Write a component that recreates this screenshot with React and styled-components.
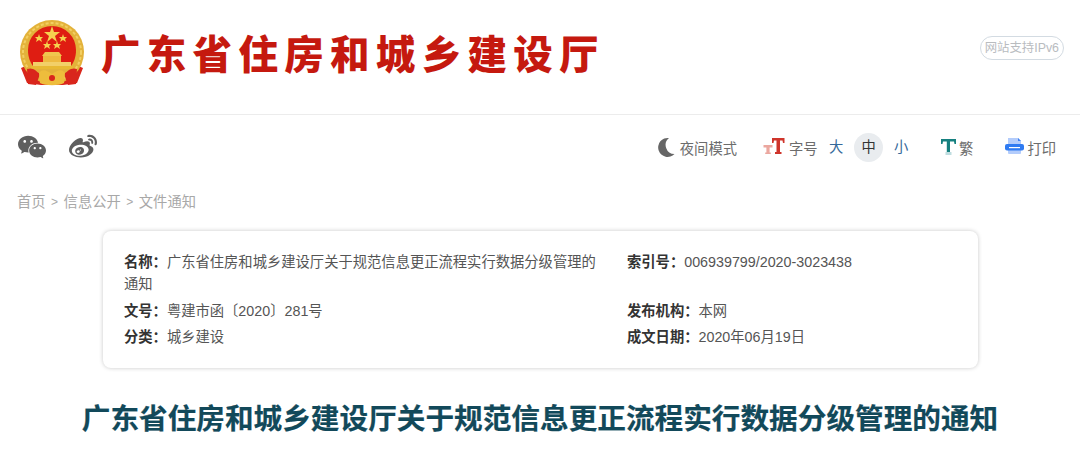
import React from "react";
import styled, { createGlobalStyle } from "styled-components";
import { AiFillWechat } from "react-icons/ai";
import { FaWeibo } from "react-icons/fa";

const GlobalStyle = createGlobalStyle`
  html, body {
    margin: 0;
    padding: 0;
    background: #fff;
    overflow: hidden;
  }
  body {
    font-family: "Liberation Sans", "Noto Sans CJK SC", sans-serif;
  }
`;

const Page = styled.div`
  width: 1080px;
  height: 451px;
  overflow: hidden;
`;

const Header = styled.header`
  height: 106px;
  border-bottom: 1px solid #ececec;
  display: flex;
  align-items: center;
  padding: 0 16px 8px 19px;
`;

const SiteName = styled.div`
  margin-left: 16px;
  font-family: "Noto Sans CJK SC", sans-serif;
  font-weight: 900;
  font-size: 39.5px;
  line-height: 50px;
  letter-spacing: 6.3px;
  color: #c5190f;
  white-space: nowrap;
  margin-bottom: 3px;
`;

const Ipv6 = styled.div`
  margin-left: auto;
  margin-bottom: 10px;
  height: 22px;
  line-height: 22px;
  padding: 0 4px;
  border: 1px solid #d3dbe2;
  border-radius: 12px;
  font-size: 12.4px;
  color: #b9bcbf;
  white-space: nowrap;
`;

const Toolbar = styled.div`
  display: flex;
  align-items: center;
  height: 64px;
  padding: 0 24px 0 16px;
`;

const Social = styled.div`
  display: flex;
  align-items: center;
  gap: 21px;
  margin-right: auto;
  color: #5f5f5f;
`;

const Tool = styled.div`
  display: flex;
  align-items: center;
  gap: ${(p) => p.$gap || 5}px;
  margin-left: ${(p) => p.$left || 0}px;
  font-size: 14.3px;
  color: #6c6c6c;
  white-space: nowrap;
`;

const SizeOption = styled.div`
  width: 29px;
  height: 29px;
  line-height: 29px;
  text-align: center;
  border-radius: 50%;
  font-size: 14.3px;
  margin-left: ${(p) => p.$left || 0}px;
  color: ${(p) => (p.$active ? "#333" : "#35699a")};
  background: ${(p) => (p.$active ? "#e9ecef" : "transparent")};
`;

const Crumbs = styled.nav`
  display: flex;
  align-items: center;
  gap: 5px;
  height: 42px;
  padding-left: 17px;
  font-size: 14.3px;
  color: #a8a8a8;
`;

const Sep = styled.span`
  font-size: 12px;
  margin: 3px 0.5px 0;
`;

const Card = styled.section`
  margin: 10px 0 0 103px;
  width: 875px;
  height: 137px;
  box-sizing: border-box;
  padding: 20px 21px;
  background: #fff;
  border-radius: 8px;
  box-shadow: 0 0 4px rgba(0, 0, 0, 0.22);
  display: grid;
  grid-template-columns: 503px 1fr;
  grid-auto-rows: min-content;
  row-gap: 4.5px;
`;

const Field = styled.div`
  width: 480px;
  font-size: 14.3px;
  line-height: 22px;
  color: #555;
`;

const Label = styled.b`
  font-weight: 700;
  color: #333;
`;

const Title = styled.h1`
  margin: 31px 0 0;
  text-align: center;
  font-family: "Noto Sans CJK SC", sans-serif;
  font-size: 28.65px;
  line-height: 36px;
  font-weight: 700;
  -webkit-text-stroke: 0.2px #12495a;
  color: #12495a;
  white-space: nowrap;
`;

const Emblem = () => (
  <svg width="66" height="68" viewBox="0 0 66 68">
    <path d="M9 46 L2 49 L8 64 L22 66 L44 66 L58 64 L64 49 L57 46 Z" fill="#d9261c" />
    <circle cx="33" cy="33" r="32" fill="#e3b23a" />
    <circle cx="33" cy="33" r="29" fill="none" stroke="#f3cf62" strokeWidth="2" strokeDasharray="3 2" />
    <path d="M9 31 A24 24 0 0 1 57 31 C57 38 55 43 52 47 L14 47 C11 43 9 38 9 31 Z" fill="#df1d12" />
    <polygon points="33,7 35,13 41,13 36,17 38,23 33,19 28,23 30,17 25,13 31,13" fill="#f6d24f" />
    <polygon points="20,15 21,18 24,18 22,20 23,23 20,21 17,23 18,20 16,18 19,18" fill="#f6d24f" />
    <polygon points="44,15 45,18 48,18 46,20 47,23 44,21 41,23 42,20 40,18 43,18" fill="#f6d24f" />
    <polygon points="28,22 29,25 32,25 30,27 31,30 28,28 25,30 26,27 24,25 27,25" fill="#f6d24f" />
    <polygon points="38,22 39,25 42,25 40,27 41,30 38,28 35,30 36,27 34,25 37,25" fill="#f6d24f" />
    <path d="M26 33 H40 L43 37 H23 Z" fill="#f0c64e" />
    <rect x="24" y="37" width="18" height="6" fill="#eeba40" />
    <rect x="14" y="43" width="38" height="4" fill="#f2cf68" />
    <rect x="12" y="47" width="42" height="3" fill="#e8b934" />
    <path d="M8 50 C14 48 17 52 21 55 L17 66 L9 65 Z" fill="#d9261c" />
    <path d="M58 50 C52 48 49 52 45 55 L49 66 L57 65 Z" fill="#d9261c" />
    <path d="M20 54 C24 49 28 52 33 55 C38 52 42 49 46 54 L45 64 C40 67 26 67 21 64 Z" fill="#eebd3c" />
    <circle cx="33" cy="59" r="3" fill="#d9261c" />
  </svg>
);

const MoonIcon = () => (
  <svg width="17" height="20" viewBox="0 0 17 20">
    <path d="M11 1 A9.5 9.5 0 1 0 16.5 17 A9 9 0 0 1 11 1 Z" fill="#666" />
  </svg>
);

const FontSizeIcon = () => (
  <svg width="22" height="20" viewBox="0 0 22 20">
    <path d="M0.5 8 H9.5 V10.5 H6.6 V15.5 H7.8 V17 H2.2 V15.5 H3.4 V10.5 H0.5 Z" fill="#eba79f" />
    <path d="M9 1 H21.5 V6 H20 L19.5 3.5 H17 V15 H18.5 V17 H12 V15 H13.5 V3.5 H11 L10.5 6 H9 Z" fill="#cf352b" />
  </svg>
);

const TradIcon = () => (
  <svg width="17" height="20" viewBox="0 0 17 20">
    <path d="M1 2 H16 V7 H14.5 L14 4.5 H10 V15 H6.8 V4.5 H3 L2.5 7 H1 Z" fill="#16807f" />
    <rect x="5.5" y="15" width="6" height="3" fill="#bfdde0" />
  </svg>
);

const PrintIcon = () => (
  <svg width="19" height="20" viewBox="0 0 19 20">
    <path d="M3 1 H13 L16 4 V16 A1 1 0 0 1 15 17 H4 A1 1 0 0 1 3 16 Z" fill="#b3ccfb" />
    <path d="M13 1 L16 4 H13 Z" fill="#3f82f3" />
    <rect x="0" y="7" width="19" height="6.5" rx="2" fill="#2f7bf2" />
    <rect x="4" y="10" width="11" height="1.2" fill="#fff" />
  </svg>
);

const App = () => (
  <Page>
    <GlobalStyle />
    <Header>
      <Emblem />
      <SiteName>广东省住房和城乡建设厅</SiteName>
      <Ipv6>网站支持IPv6</Ipv6>
    </Header>
    <Toolbar>
      <Social>
        <AiFillWechat size={32} />
        <FaWeibo size={28} />
      </Social>
      <Tool>
        <MoonIcon />
        夜间模式
      </Tool>
      <Tool $left={26} $gap={4}>
        <FontSizeIcon />
        字号
      </Tool>
      <SizeOption $left={4}>大</SizeOption>
      <SizeOption $active $left={3.5}>
        中
      </SizeOption>
      <SizeOption $left={3.5}>小</SizeOption>
      <Tool $left={24.5} $gap={2}>
        <TradIcon />
        繁
      </Tool>
      <Tool $left={32} $gap={3}>
        <PrintIcon />
        打印
      </Tool>
    </Toolbar>
    <Crumbs>
      首页<Sep>&gt;</Sep>信息公开<Sep>&gt;</Sep>文件通知
    </Crumbs>
    <Card>
      <Field>
        <Label>名称：</Label>广东省住房和城乡建设厅关于规范信息更正流程实行数据分级管理的通知
      </Field>
      <Field>
        <Label>索引号：</Label>006939799/2020-3023438
      </Field>
      <Field>
        <Label>文号：</Label>粤建市函〔2020〕281号
      </Field>
      <Field>
        <Label>发布机构：</Label>本网
      </Field>
      <Field>
        <Label>分类：</Label>城乡建设
      </Field>
      <Field>
        <Label>成文日期：</Label>2020年06月19日
      </Field>
    </Card>
    <Title>广东省住房和城乡建设厅关于规范信息更正流程实行数据分级管理的通知</Title>
  </Page>
);

export default App;
